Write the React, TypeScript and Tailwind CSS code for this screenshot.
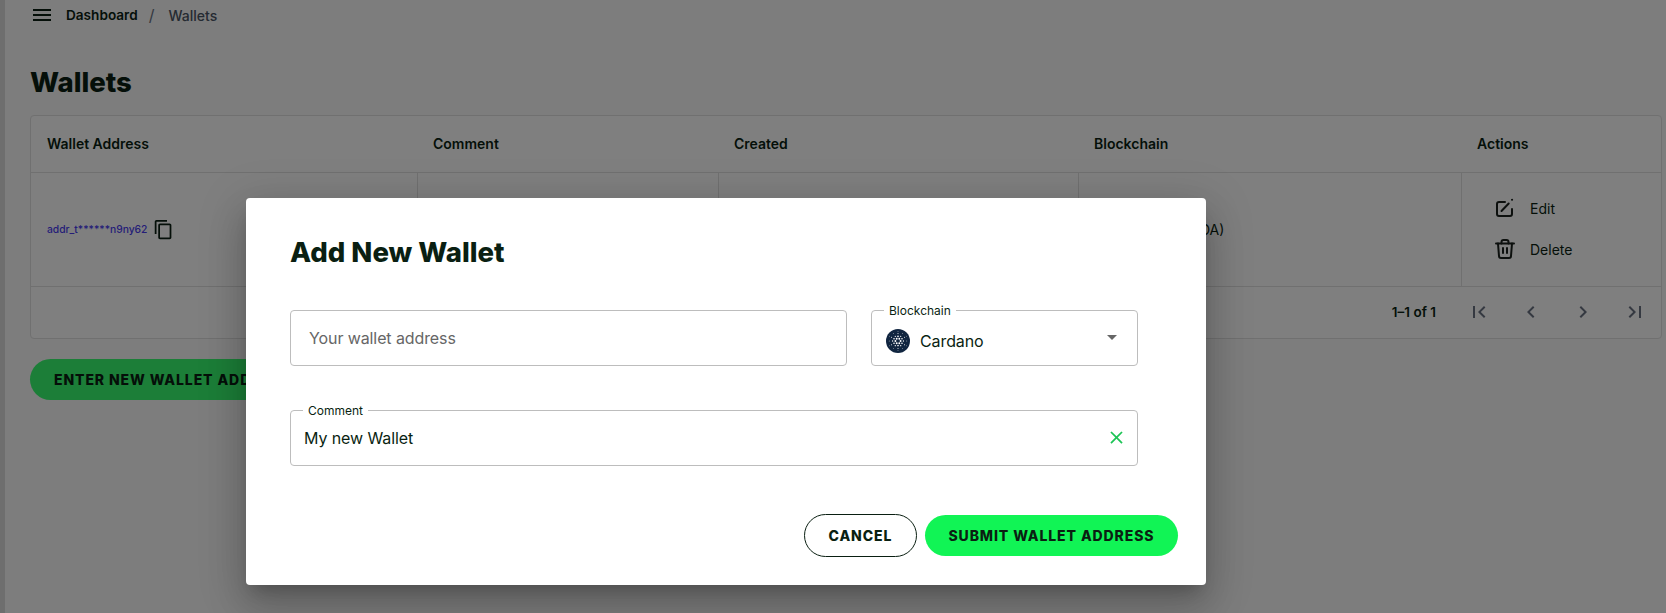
import React from 'react';
import { MdMenu, MdOutlineContentCopy, MdFirstPage, MdLastPage, MdChevronLeft, MdChevronRight, MdClear, MdArrowDropDown } from 'react-icons/md';

const columns = [
  { label: 'Wallet Address', width: 'w-[386px]' },
  { label: 'Comment', width: 'w-[301px]' },
  { label: 'Created', width: 'w-[360px]' },
  { label: 'Blockchain', width: 'w-[383px]' },
  { label: 'Actions', width: 'flex-1' },
];

const CardanoLogo = ({ size }: { size: number }) => {
  const dots: React.ReactNode[] = [];
  [
    { r: 2.6, n: 6, s: 0.95, o: 0 },
    { r: 4.6, n: 6, s: 0.8, o: 30 },
    { r: 5.4, n: 6, s: 0.65, o: 0 },
    { r: 7.6, n: 6, s: 0.5, o: 30 },
    { r: 8.8, n: 6, s: 0.4, o: 0 },
    { r: 9.6, n: 6, s: 0.35, o: 30 },
  ].forEach((ring, i) => {
    for (let k = 0; k < ring.n; k++) {
      const a = ((ring.o + (k * 360) / ring.n) * Math.PI) / 180;
      dots.push(<circle key={`${i}-${k}`} cx={12 + ring.r * Math.cos(a)} cy={12 + ring.r * Math.sin(a)} r={ring.s} fill="#fff" />);
    }
  });
  return (
    <svg width={size} height={size} viewBox="0 0 24 24">
      <circle cx="12" cy="12" r="12" fill="#102540" />
      {dots}
    </svg>
  );
};

const EditIcon = () => (
  <svg width="24" height="24" viewBox="0 0 24 24" fill="none" stroke="#1a211d" strokeWidth="2" strokeLinecap="round" strokeLinejoin="round">
    <path d="M12 6H6a2 2 0 0 0-2 2v10a2 2 0 0 0 2 2h11a2 2 0 0 0 2-2v-5" />
    <path d="M8.500 15l7.200-7.500" />
    <path d="M19 3.800l.1-.1" />
  </svg>
);

const TrashIcon = () => (
  <svg width="24" height="24" viewBox="0 0 24 24" fill="none" stroke="#1a211d" strokeWidth="2" strokeLinecap="round" strokeLinejoin="round">
    <path d="M3 6.500h18" />
    <path d="M8.500 6.500V5a2 2 0 0 1 2-2h3a2 2 0 0 1 2 2v1.500" />
    <path d="M5 6.500l1 12.500a2 2 0 0 0 2 2h8a2 2 0 0 0 2-2l1-12.500" />
    <path d="M10 11v5" />
    <path d="M14 11v5" />
  </svg>
);

export default function App() {
  return (
    <div className="relative h-[613px] w-[1666px] overflow-hidden bg-[#fafafa] font-['Inter',sans-serif] text-[#0a1f12]">
      <div className="flex h-full">
        <div className="w-[5px] shrink-0 bg-[#dcdcdc]" />
        <main className="min-w-0 flex-1 pl-[25px] pr-[4px]">
          <div className="flex h-[30px] items-center pl-[1px]">
            <MdMenu className="ml-[-1px] text-[24px]" />
            <span className="ml-[12px] text-[13.6px] font-semibold">Dashboard</span>
            <span className="ml-[11px] mr-[14px] text-[16px] text-gray-500">/</span>
            <span className="text-[14px] font-medium text-gray-600">Wallets</span>
          </div>
          <h1 className="mt-[37px] text-[27.5px] font-extrabold leading-[30px]">Wallets</h1>
          <div className="mt-[18px] rounded border border-[#e0e0e0] bg-white">
            <div className="flex h-[57px] border-b border-[#e0e0e0] pb-[2px]">
              {columns.map((c) => (
                <div key={c.label} className={`${c.width} flex items-center pl-4 text-[14px] font-semibold`}>{c.label}</div>
              ))}
            </div>
            <div className="flex h-[114px] border-b border-[#e0e0e0]">
              <div className="flex w-[387px] items-center border-r border-[#e0e0e0] pl-4">
                <span className="text-[10.3px] font-medium text-[#4a3cf0]">addr_t******n9ny62</span>
                <MdOutlineContentCopy className="ml-[6px] text-[21px]" />
              </div>
              <div className="w-[301px] border-r border-[#e0e0e0]" />
              <div className="w-[360px] border-r border-[#e0e0e0]" />
              <div className="flex w-[383px] items-center gap-[6px] border-r border-[#e0e0e0] pl-4 text-[14px]">
                <CardanoLogo size={24} />
                Cardano (ADA)
              </div>
              <div className="flex flex-1 flex-col justify-center gap-[17px] pb-[2px] pl-[31px] text-[14px]">
                <div className="flex items-center gap-[13px]"><EditIcon /><span>Edit</span></div>
                <div className="flex items-center gap-[13px]"><TrashIcon /><span>Delete</span></div>
              </div>
            </div>
            <div className="flex h-[51px] items-center justify-end pb-[1px]">
              <span className="mr-[17px] text-[13.5px] font-semibold">1–1 of 1</span>
              <div className="flex text-[24px] text-gray-500">
                <div className="flex w-[52px] justify-center"><MdFirstPage /></div>
                <div className="flex w-[52px] justify-center"><MdChevronLeft /></div>
                <div className="flex w-[52px] justify-center"><MdChevronRight /></div>
                <div className="flex w-[52px] justify-center"><MdLastPage /></div>
              </div>
            </div>
          </div>
          <button className="mt-[20px] h-[41px] rounded-full bg-[#38fc70] px-6 text-[14px] font-extrabold tracking-[0.9px]">ENTER NEW WALLET ADDRESS</button>
        </main>
      </div>

      {/* scrim + dialog */}
      <div className="absolute inset-0 bg-black/50">
        <div className="absolute left-[246px] top-[198px] h-[387px] w-[960px] rounded bg-white shadow-[0_11px_15px_-7px_rgba(0,0,0,0.2),0_24px_38px_3px_rgba(0,0,0,0.14),0_9px_46px_8px_rgba(0,0,0,0.12)]">
          <div className="pl-[44px] pr-[28px] pt-[39px]">
            <h2 className="text-[27.5px] font-extrabold leading-[30px]">Add New Wallet</h2>
            <div className="mt-[43px] flex gap-[24px]">
              <div className="flex h-[56px] w-[557px] items-center rounded border border-[#bdbdbd] pl-[18px] text-[16px] tracking-[-0.1px] text-[#666]">Your wallet address</div>
              <div className="relative flex h-[56px] w-[267px] items-center rounded border border-[#bdbdbd] pl-[14px] pt-[6px] text-[16px] tracking-[-0.1px]">
                <span className="absolute left-[12px] top-[-7px] bg-white px-[5px] text-[12px] leading-[14px] tracking-normal">Blockchain</span>
                <CardanoLogo size={24} />
                <span className="ml-[10px]">Cardano</span>
                <MdArrowDropDown className="absolute right-[13px] top-[14px] text-[24px] text-[#666]" />
              </div>
            </div>
            <div className="relative mt-[44px] flex h-[56px] w-[848px] items-center rounded border border-[#bdbdbd] pl-[13px] text-[16px] tracking-[-0.1px]">
              <span className="absolute left-[12px] top-[-7px] bg-white px-[5px] text-[12px] leading-[14px] tracking-normal">Comment</span>
              My new Wallet
              <MdClear className="absolute right-[10px] top-[16px] text-[21px] text-[#1cc455]" />
            </div>
            <div className="mt-[48px] flex items-center justify-end gap-2">
              <button className="h-[43px] w-[113px] rounded-full border border-[#0a1f12] text-[14px] font-extrabold tracking-[0.9px]">CANCEL</button>
              <button className="h-[41px] rounded-full bg-[#11f455] px-[23.5px] text-[14px] font-extrabold tracking-[0.9px]">SUBMIT WALLET ADDRESS</button>
            </div>
          </div>
        </div>
      </div>
    </div>
  );
}
